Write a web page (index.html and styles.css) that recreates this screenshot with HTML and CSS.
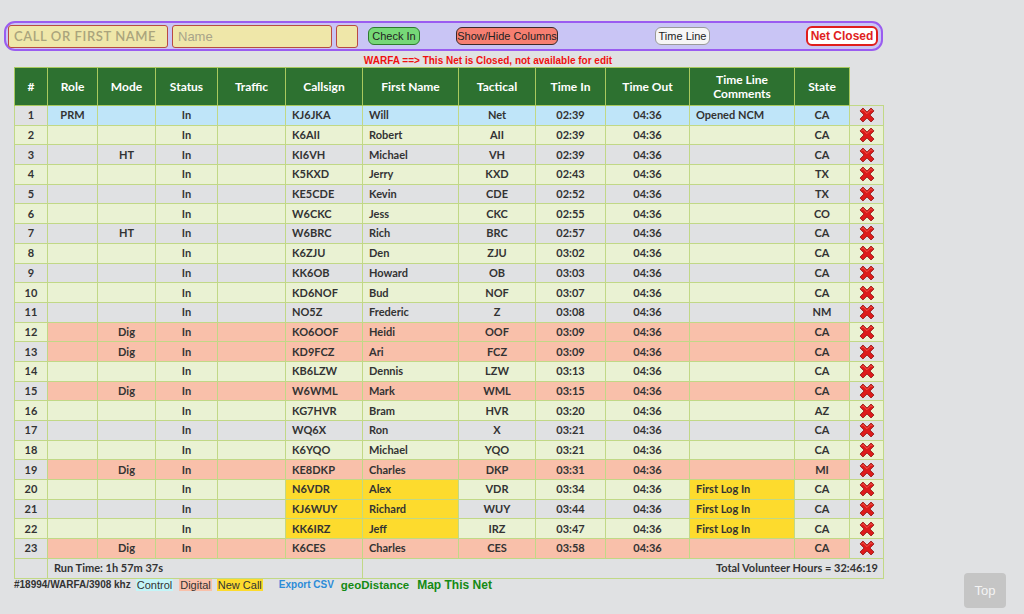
FILE: index.html
```html
<!DOCTYPE html>
<html>
<head>
<meta charset="utf-8">
<link rel="stylesheet" href="styles.css">
</head>
<body>
<form class="topbar">
  <input class="in-call" placeholder="CALL OR FIRST NAME">
  <input class="in-name" placeholder="Name">
  <input class="in-small">
  <button type="button" class="btn btn-check">Check In</button>
  <button type="button" class="btn btn-cols">Show/Hide Columns</button>
  <button type="button" class="btn btn-time">Time Line</button>
  <button type="button" class="btn btn-closed">Net Closed</button>
</form>
<div class="msg">WARFA ==&gt; This Net is Closed, not available for edit</div>
<table class="net">
  <colgroup>
    <col class="c-num"><col class="c-role"><col class="c-mode"><col class="c-status"><col class="c-traffic"><col class="c-call"><col class="c-first"><col class="c-tact"><col class="c-tin"><col class="c-tout"><col class="c-comm"><col class="c-state"><col class="c-x">
  </colgroup>
  <thead>
    <tr>
      <th>#</th><th>Role</th><th>Mode</th><th>Status</th><th>Traffic</th><th>Callsign</th><th>First Name</th><th>Tactical</th><th>Time In</th><th>Time Out</th><th>Time Line<br>Comments</th><th>State</th><th class="blank"></th>
    </tr>
  </thead>
  <tbody id="rows"></tbody>
  <tfoot>
    <tr>
      <td></td>
      <td colspan="5" class="left">Run Time: 1h 57m 37s</td>
      <td colspan="7" class="right">Total Volunteer Hours = 32:46:19</td>
    </tr>
  </tfoot>
</table>
<div class="legend">
  <span class="freq">#18994/WARFA/3908 khz</span>
  <span class="tag t-control">Control</span>
  <span class="tag t-digital">Digital</span>
  <span class="tag t-new">New Call</span>
  <a class="lnk l-csv">Export CSV</a>
  <a class="lnk l-geo">geoDistance</a>
  <a class="lnk l-map">Map This Net</a>
</div>
<div class="topbtn">Top</div>
<script src="app.js"></script>
</body>
</html>
```
FILE: app.js
```js
var data = [
 [1,"PRM","","KJ6JKA","Will","Net","02:39","Opened NCM","CA","control"],
 [2,"","","K6AII","Robert","AII","02:39","","CA",""],
 [3,"","HT","KI6VH","Michael","VH","02:39","","CA",""],
 [4,"","","K5KXD","Jerry","KXD","02:43","","TX",""],
 [5,"","","KE5CDE","Kevin","CDE","02:52","","TX",""],
 [6,"","","W6CKC","Jess","CKC","02:55","","CO",""],
 [7,"","HT","W6BRC","Rich","BRC","02:57","","CA",""],
 [8,"","","K6ZJU","Den","ZJU","03:02","","CA",""],
 [9,"","","KK6OB","Howard","OB","03:03","","CA",""],
 [10,"","","KD6NOF","Bud","NOF","03:07","","CA",""],
 [11,"","","NO5Z","Frederic","Z","03:08","","NM",""],
 [12,"","Dig","KO6OOF","Heidi","OOF","03:09","","CA","digital"],
 [13,"","Dig","KD9FCZ","Ari","FCZ","03:09","","CA","digital"],
 [14,"","","KB6LZW","Dennis","LZW","03:13","","CA",""],
 [15,"","Dig","W6WML","Mark","WML","03:15","","CA","digital"],
 [16,"","","KG7HVR","Bram","HVR","03:20","","AZ",""],
 [17,"","","WQ6X","Ron","X","03:21","","CA",""],
 [18,"","","K6YQO","Michael","YQO","03:21","","CA",""],
 [19,"","Dig","KE8DKP","Charles","DKP","03:31","","MI","digital"],
 [20,"","","N6VDR","Alex","VDR","03:34","First Log In","CA","new"],
 [21,"","","KJ6WUY","Richard","WUY","03:44","First Log In","CA","new"],
 [22,"","","KK6IRZ","Jeff","IRZ","03:47","First Log In","CA","new"],
 [23,"","Dig","K6CES","Charles","CES","03:58","","CA","digital"]
];
var xsvg = '<svg class="xi" viewBox="0 0 16 16" width="18" height="18"><path d="M1.8 4.4 L4.4 1.8 L8 5.4 L11.6 1.8 L14.2 4.4 L10.6 8 L14.2 11.6 L11.6 14.2 L8 10.6 L4.4 14.2 L1.8 11.6 L5.4 8 Z" fill="#dd1b1b" stroke="#8e0c0c" stroke-width="0.7" stroke-linejoin="round"/><path d="M3.2 4.4 L4.4 3.2 L8 6.8 L11.6 3.2 L12.6 4.2" fill="none" stroke="#f56a5a" stroke-width="0.7" stroke-linecap="round" stroke-linejoin="round"/></svg>';
var html = "";
data.forEach(function(r){
  var cls = (r[0] % 2 === 0 ? "even" : "odd") + (r[9] ? " " + r[9] : "");
  var nc = r[9] === "new" ? " yel" : "";
  html += '<tr class="' + cls + '">' +
    '<td class="num">' + r[0] + '</td>' +
    '<td class="hl">' + r[1] + '</td>' +
    '<td class="hl">' + r[2] + '</td>' +
    '<td class="hl">In</td>' +
    '<td class="hl"></td>' +
    '<td class="hl left' + nc + '">' + r[3] + '</td>' +
    '<td class="hl left' + nc + '">' + r[4] + '</td>' +
    '<td class="hl">' + r[5] + '</td>' +
    '<td class="hl">' + r[6] + '</td>' +
    '<td class="hl">04:36</td>' +
    '<td class="hl left' + nc + '">' + r[7] + '</td>' +
    '<td class="hl">' + r[8] + '</td>' +
    '<td class="xc">' + xsvg + '</td>' +
    '</tr>';
});
document.getElementById("rows").innerHTML = html;
```
FILE: styles.css
```css
html, body {
  margin: 0;
  padding: 0;
}
body {
  background: #e0e1e3;
  font-family: "Lato", "DejaVu Sans", sans-serif;
  color: #333;
  width: 1024px;
  height: 614px;
  overflow: hidden;
  position: relative;
}
.topbar {
  margin: 21px 0 0 4px;
  width: 875px;
  height: 26px;
  border: 2px solid #9a5cf0;
  border-radius: 11px;
  background: #c9c5f5;
  display: flex;
  align-items: center;
  padding: 0;
  box-sizing: content-box;
}
.topbar input {
  box-sizing: border-box;
  height: 23px;
  background: #efe7a9;
  border: 1px solid #b84a44;
  border-radius: 3px;
  margin: 0;
  padding: 0 5px;
  font-family: "Lato", sans-serif;
  flex: none;
}
.in-call {
  width: 160px;
  margin-left: 2px !important;
  font-size: 13px;
  letter-spacing: 0.6px;
}
.in-call::placeholder {
  color: #aaa47c;
  font-weight: 600;
}
.in-name {
  width: 160px;
  margin-left: 4px !important;
  font-size: 13px;
}
.in-name::placeholder {
  color: #a8a48a;
  font-family: "Liberation Sans", sans-serif;
}
.in-small {
  width: 22px;
  margin-left: 4px !important;
}
.btn {
  box-sizing: border-box;
  flex: none;
  font-family: "Liberation Sans", Arial, sans-serif;
  font-size: 11px;
  height: 18px;
  padding: 0;
  border-radius: 6px;
  color: #222;
  white-space: nowrap;
  line-height: 14px;
}
.btn-check {
  margin-left: 10px;
  background: #76d877;
  border: 1px solid #2e7a2e;
  width: 52px;
}
.btn-cols {
  margin-left: 36px;
  background: #f67f71;
  border: 1px solid #3a2a2a;
  width: 102px;
}
.btn-time {
  margin-left: 97px;
  background: #f6f6f6;
  border: 1px solid #9a9a9a;
  width: 55px;
}
.btn-closed {
  margin-left: 96px;
  background: #fff;
  border: 2px solid #e01e1e;
  color: #e01e1e;
  font-weight: bold;
  font-size: 12px;
  width: 72px;
  height: 20px;
}
.msg {
  width: 976px;
  text-align: center;
  color: #f01010;
  font-family: "Liberation Sans", Arial, sans-serif;
  font-weight: bold;
  font-size: 10px;
  margin-top: 3px;
  height: 13px;
  line-height: 13px;
}
.net {
  margin: 0 0 0 14px;
  border-collapse: collapse;
  table-layout: fixed;
  width: 869px;
  font-size: 11px;
  font-weight: bold;
}
.c-num { width: 33px; }
.c-role { width: 50px; }
.c-mode { width: 58px; }
.c-status { width: 62px; }
.c-traffic { width: 68px; }
.c-call { width: 77px; }
.c-first { width: 96px; }
.c-tact { width: 77px; }
.c-tin { width: 70px; }
.c-tout { width: 84px; }
.c-comm { width: 105px; }
.c-state { width: 55px; }
.c-x { width: 34px; }
.net th {
  background: #2d7130;
  color: #fff;
  font-size: 12px;
  font-weight: bold;
  height: 37px;
  padding: 0;
  border: 1px solid #a9c95e;
  line-height: 14px;
}
.net th.blank {
  background: transparent;
  border: none;
}
.net td {
  height: 18.7px;
  padding: 0 6px;
  border: 1px solid #c1d886;
  text-align: center;
  line-height: 14px;
  white-space: nowrap;
  overflow: hidden;
}
.net td.left { text-align: left; }
.net td.right { text-align: right; padding-right: 5px; }
tr.odd td { background: #e0e1e3; }
tr.even td { background: #eaf2d3; }
tr.control td.hl { background: #bfe5f9; }
tr.digital td.hl { background: #f9c0aa; }
tr.new td.yel { background: #fddb2d; }
.net td.xc { padding: 0; }
.xi { display: block; margin: 0 auto; }
tfoot td {
  background: #e0e1e3;
  height: 16px;
}
.legend {
  margin: -2px 0 0 14px;
  font-family: "Liberation Sans", Arial, sans-serif;
  font-weight: bold;
  font-size: 10px;
  color: #333;
  display: flex;
  align-items: center;
  height: 16px;
  white-space: nowrap;
}
.tag { padding: 0 1px; font-size: 11px; font-weight: normal; color: #333; }
.t-control { background: #c3f5f8; margin-left: 5px; }
.t-digital { background: #f9c0aa; margin-left: 6px; }
.t-new { background: #fddb2d; margin-left: 5px; }
.l-csv { color: #2b8bd8; margin-left: 16px; font-size: 10px; }
.l-geo { color: #148a14; margin-left: 7px; font-size: 11.5px; }
.l-map { color: #148a14; margin-left: 8px; font-size: 12px; }
.topbtn {
  position: absolute;
  left: 964px;
  top: 573px;
  width: 42px;
  height: 35px;
  background: #c5c5c5;
  border-radius: 4px;
  color: #f4f4f4;
  font-family: "Liberation Sans", Arial, sans-serif;
  font-size: 13px;
  line-height: 35px;
  text-align: center;
}
```
